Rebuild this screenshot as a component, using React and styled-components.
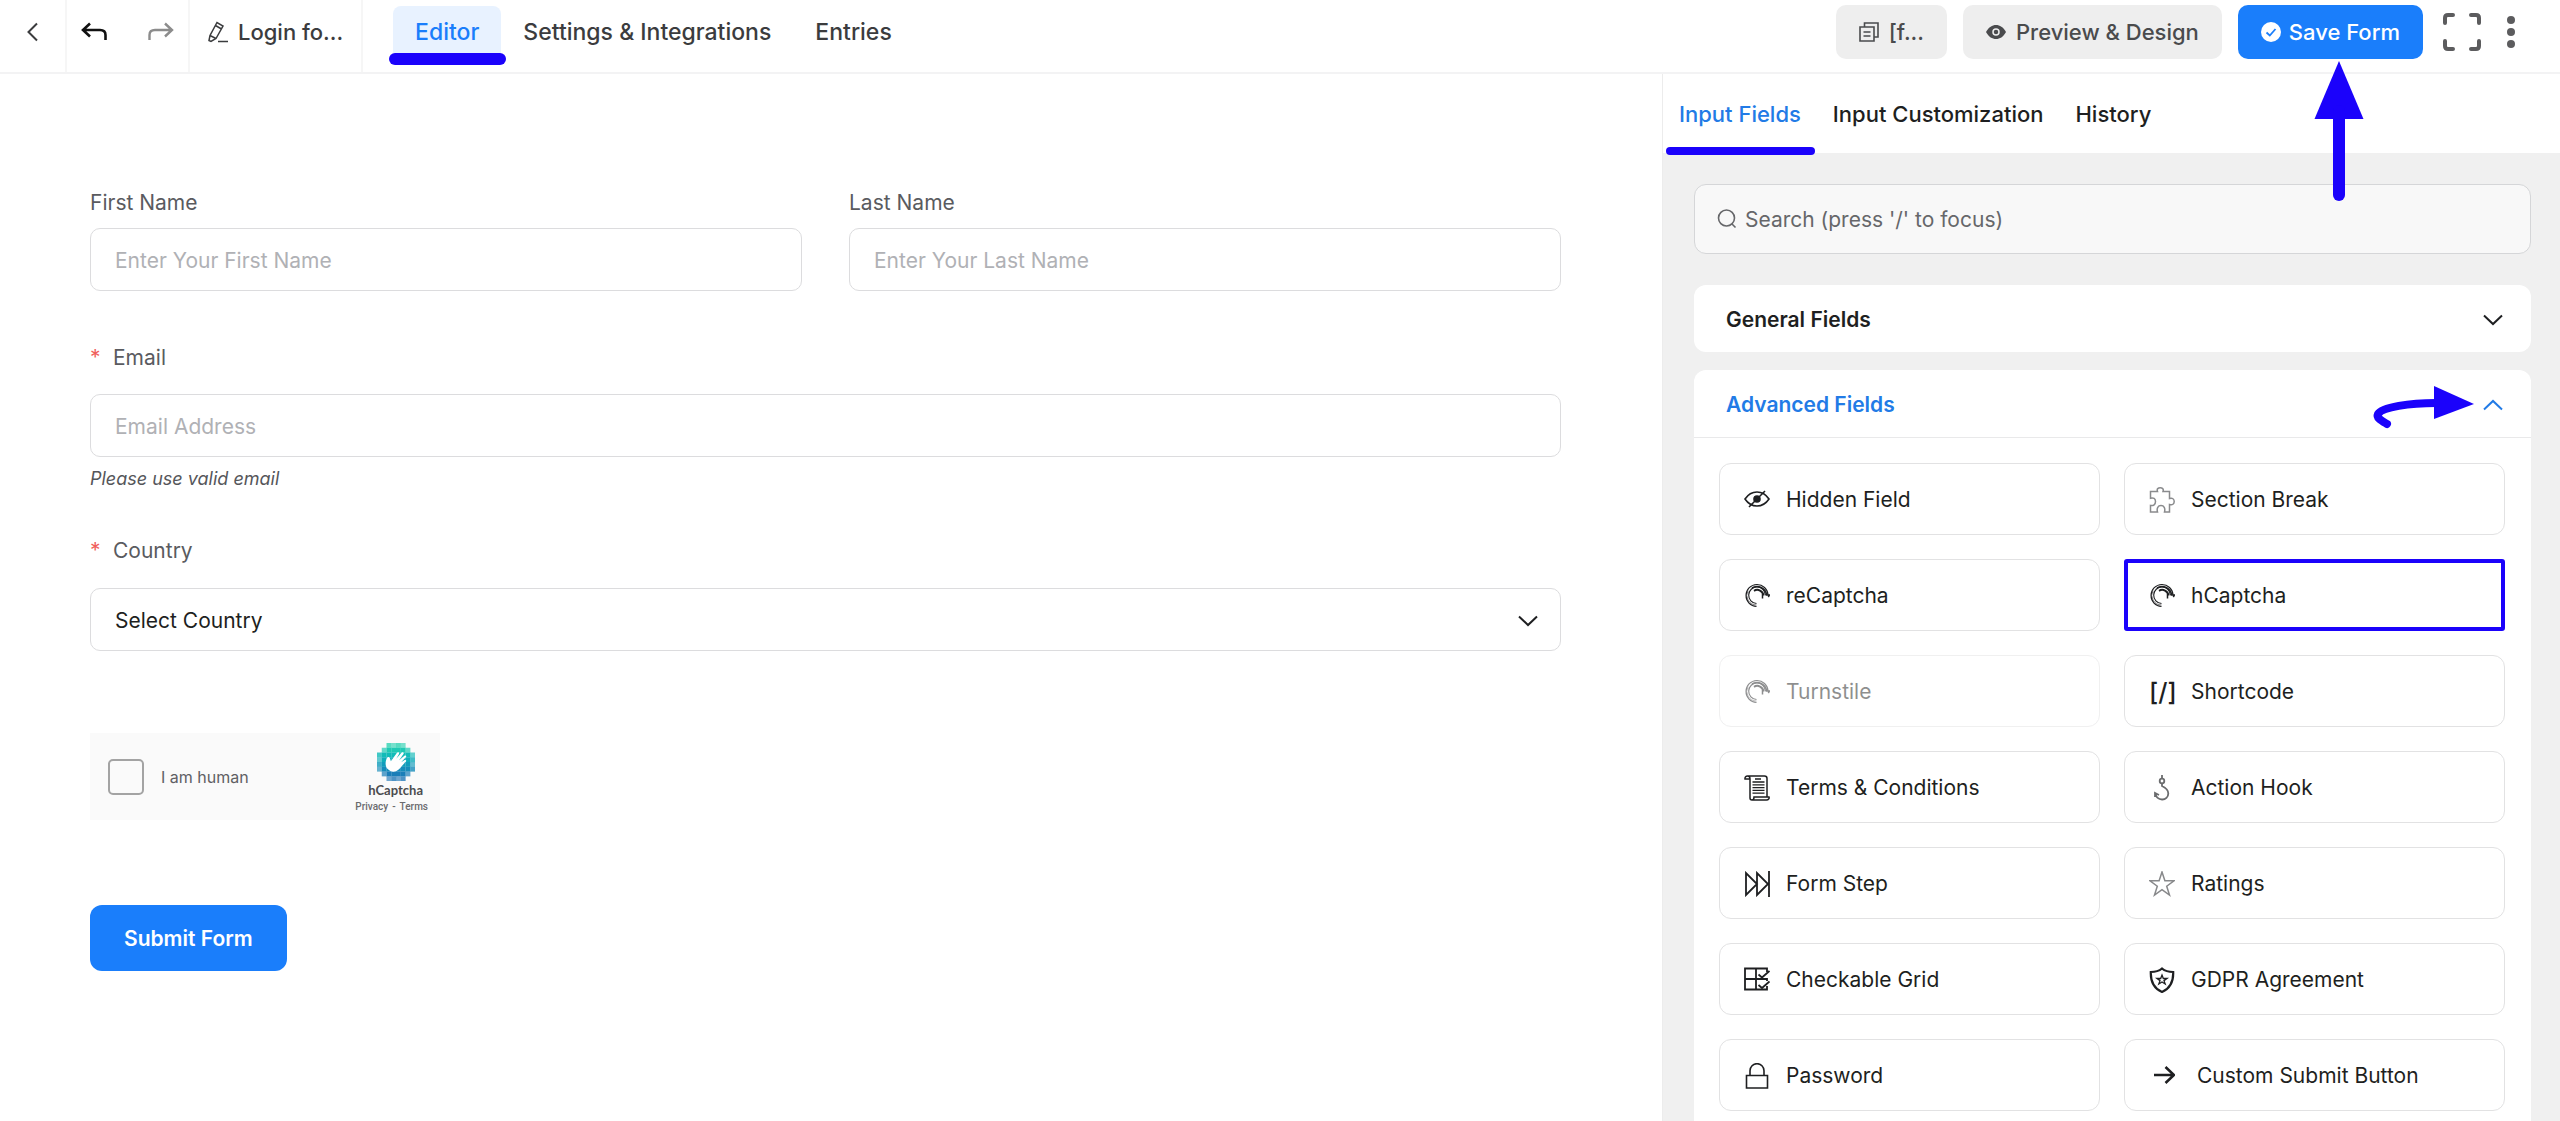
import React from "react";
import styled, { createGlobalStyle, css } from "styled-components";

const blue = "#1a7efb";
const linkBlue = "#227be6";
const marker = "#1b02fb";
const ink = "#1e1f21";
const line = "#e2e2e3";

const GlobalStyle = createGlobalStyle`
  *, *::before, *::after { box-sizing: border-box; }
  body {
    margin: 0;
    background: #fff;
    color: ${ink};
    font-family: Inter, "Liberation Sans", sans-serif;
    font-size: 21px;
    line-height: 30px;
  }
  button, input, select { font: inherit; color: inherit; }
  button { cursor: pointer; }
  svg { display: block; flex: none; }
`;

const Shell = styled.div`
  display: flex;
  flex-direction: column;
  height: 100vh;
  overflow: hidden;
`;

const Header = styled.header`
  display: flex;
  flex: none;
  height: 74px;
  border-bottom: 2px solid #f3f3f4;
  font-size: 22px;
  font-weight: 500;
  color: #3b3c3e;
`;

const HeaderCell = styled.div`
  display: flex;
  align-items: center;
  gap: ${(p) => p.$gap || 0}px;
  padding: 0 ${(p) => p.$pad}px 8px;
  border-right: 2px solid #f6f6f6;
`;

const IconButton = styled.button`
  display: flex;
  align-items: center;
  justify-content: center;
  padding: 0;
  border: 0;
  background: none;
  color: ${(p) => p.$color || "#3b3c3e"};
`;

const FormName = styled.button`
  display: flex;
  align-items: center;
  gap: 10px;
  padding: 0;
  border: 0;
  background: none;
`;

const Nav = styled.nav`
  display: flex;
  margin-left: 30px;
  padding-top: 6px;
  height: 60px;
  font-size: 23px;
`;

const NavLink = styled.a`
  position: relative;
  padding: 11px 22px;
  color: inherit;
  text-decoration: none;
  border-radius: 8px;
  ${(p) =>
    p.$active &&
    css`
      color: ${blue};
      background: #e8f2ff;
      &::after {
        content: "";
        position: absolute;
        left: -4px;
        right: -5px;
        top: 47px;
        height: 12px;
        border-radius: 6px;
        background: ${marker};
      }
    `}
`;

const Actions = styled.div`
  display: flex;
  align-items: center;
  gap: 16px;
  margin-left: auto;
  padding: 0 45px 8px 0;
`;

const ActionButton = styled.button`
  display: flex;
  align-items: center;
  justify-content: center;
  gap: ${(p) => (p.$primary ? 8 : 10)}px;
  height: 54px;
  padding: 0 ${(p) => p.$pad}px;
  border: 0;
  border-radius: 10px;
  font-weight: 500;
  background: ${(p) => (p.$primary ? blue : "#eeeeee")};
  color: ${(p) => (p.$primary ? "#fff" : "#4a4b4d")};
`;

const SaveSlot = styled.div`
  position: relative;
`;

const UpArrow = styled.svg`
  position: absolute;
  z-index: 2;
  left: 76px;
  top: 56px;
`;

const WindowTools = styled.div`
  display: flex;
  align-items: center;
  gap: 26px;
  margin-left: 4px;
`;

const Body = styled.div`
  display: flex;
  flex: 1;
  min-height: 0;
`;

const Canvas = styled.main`
  flex: 1;
  min-width: 0;
  padding: 114px 101px 0 90px;
`;

const FieldRow = styled.div`
  display: grid;
  grid-template-columns: 1fr 1fr;
  gap: 47px;
  margin-bottom: 52px;
`;

const Field = styled.div`
  display: flex;
  flex-direction: column;
  gap: ${(p) => p.$gap}px;
`;

const Label = styled.label`
  display: flex;
  gap: 13px;
  color: #5a5b5f;
`;

const Star = styled.span`
  color: #f0605c;
  width: 10px;
`;

const inputBox = css`
  display: block;
  width: 100%;
  height: 63px;
  padding: 2px 24px 0;
  border: 1px solid #dcdcde;
  border-radius: 10px;
  background: #fff;
`;

const TextInput = styled.input`
  ${inputBox}
  &::placeholder { color: #b0b1b5; opacity: 1; }
`;

const Help = styled.p`
  margin: 10px 0 45px;
  font-size: 18px;
  line-height: 24px;
  font-style: italic;
  color: #55565a;
`;

const SelectWrap = styled.div`
  position: relative;
  svg {
    position: absolute;
    right: 23px;
    top: 27px;
    pointer-events: none;
  }
`;

const Select = styled.select`
  ${inputBox}
  appearance: none;
`;

const Captcha = styled.div`
  display: flex;
  align-items: center;
  width: 350px;
  height: 87px;
  margin: 82px 0 85px;
  padding: 0 12px 0 18px;
  background: #fafafa;
`;

const CaptchaLabel = styled.label`
  display: flex;
  align-items: center;
  gap: 17px;
  font-size: 16px;
  line-height: 24px;
  color: #5f6064;
`;

const CaptchaBox = styled.input`
  appearance: none;
  width: 36px;
  height: 36px;
  margin: 0;
  border: 2px solid #a3a3a3;
  border-radius: 5px;
  background: #fafafa;
`;

const CaptchaBrand = styled.div`
  display: flex;
  flex-direction: column;
  align-items: flex-end;
  margin-left: auto;
  padding-top: 4px;
`;

const BrandMark = styled.div`
  display: flex;
  flex-direction: column;
  align-items: center;
  margin-right: 5px;
`;

const BrandName = styled.strong`
  font: 700 13px/18px Lato, sans-serif;
  color: #4b4c4e;
`;

const BrandLinks = styled.div`
  display: flex;
  gap: 4px;
  font: 500 10px/16px Roboto, sans-serif;
  color: #6a6b6e;
  a { color: inherit; text-decoration: none; }
`;

const Submit = styled.button`
  height: 66px;
  padding: 2px 34px 0;
  border: 0;
  border-radius: 12px;
  background: ${blue};
  color: #fff;
  font-weight: 600;
`;

const Sidebar = styled.aside`
  display: flex;
  flex-direction: column;
  width: 898px;
  flex: none;
  border-left: 1px solid #ececec;
  background: #f0f0f0;
`;

const PanelTabs = styled.div`
  display: flex;
  flex: none;
  gap: 32px;
  height: 79px;
  padding: 24px 16px;
  background: #fff;
  font-size: 22px;
`;

const PanelTab = styled.button`
  position: relative;
  padding: 0;
  border: 0;
  background: none;
  font-weight: 500;
  color: ${(p) => (p.$active ? linkBlue : ink)};
  ${(p) =>
    p.$active &&
    css`
      &::after {
        content: "";
        position: absolute;
        z-index: 1;
        left: -13px;
        right: -14px;
        top: 49px;
        height: 8px;
        border-radius: 4px;
        background: ${marker};
      }
    `}
`;

const PanelBody = styled.div`
  display: flex;
  flex-direction: column;
  gap: 18px;
  padding: 31px 29px 0 31px;
  overflow: hidden;
`;

const Search = styled.div`
  display: flex;
  flex: none;
  align-items: center;
  gap: 8px;
  height: 70px;
  margin-bottom: 13px;
  padding: 0 22px;
  border: 1px solid #d5d6d8;
  border-radius: 12px;
  background: #f8f8f8;
  input {
    flex: 1;
    padding: 2px 0 0;
    border: 0;
    background: none;
    &::placeholder { color: #66676a; opacity: 1; }
  }
`;

const Section = styled.section`
  flex: none;
  border-radius: 12px;
  background: #fff;
`;

const SectionHead = styled.button`
  display: flex;
  align-items: center;
  gap: 8px;
  width: 100%;
  height: 67px;
  padding: 2px 28px 0 32px;
  border: 0;
  background: none;
  font-weight: 600;
  text-align: left;
  color: ${(p) => (p.$open ? linkBlue : ink)};
`;

const SectionTitle = styled.span`
  flex: 1;
`;

const FieldGrid = styled.div`
  display: grid;
  grid-template-columns: 1fr 1fr;
  gap: 24px;
  padding: 25px 26px 25px 25px;
  border-top: 1px solid #e9e9ea;
`;

const FieldTile = styled.button`
  display: flex;
  align-items: center;
  gap: ${(p) => (p.$wide ? 22 : 16)}px;
  height: 72px;
  padding: 2px 24px 0;
  border: 1px solid ${line};
  border-radius: 12px;
  background: #fff;
  text-align: left;
  &:disabled { opacity: 0.5; color: inherit; }
  ${(p) =>
    p.$marked &&
    css`
      padding: 2px 21px 0;
      border: 4px solid ${marker};
      border-radius: 3px;
    `}
`;

const Code = styled.span`
  width: 26px;
  font-size: 25px;
  font-weight: 500;
  text-align: center;
  white-space: nowrap;
`;

const Glyph = ({ children, w = 26, h = 26, sw = 2, color = "currentColor" }) => (
  <svg width={w} height={h} viewBox={`0 0 ${w} ${h}`} fill="none" stroke={color} strokeWidth={sw} aria-hidden="true">
    {children}
  </svg>
);

const Chevron = ({ up }) => (
  <Glyph w={20} h={12}>
    <path d={up ? "M1 10.5 10 2l9 8.5" : "M1 1.5 10 10l9-8.5"} />
  </Glyph>
);

const EyeOff = () => (
  <Glyph sw={1.6}>
    <path d="M1 12C4 7.500 8 5 13 5S22 7.500 25 12C22 16.500 18 19 13 19S4 16.500 1 12Z" />
    <circle cx="13" cy="12" r="3" fill="currentColor" />
    <path d="M5 20 21 4" />
  </Glyph>
);

const Puzzle = () => (
  <Glyph sw={1.5} color="#8a8b8d">
    <path d="M1.500 4.500H8.500C7.500 1.800 9.200.8 11.200.8S15 1.800 14 4.500H20.500V11.500C23.500 10.500 25.200 12.200 25.200 14.500S23.500 18.500 20.500 17.500V25H15.500C16.500 21.200 15 18.500 12 18.500S7.500 21.200 8.500 25H1.500V18.500C4.500 19 6.500 17.500 6.500 14.500S4.500 10.500 1.500 11.200Z" />
  </Glyph>
);

const Spinner = () => (
  <Glyph sw={1.1}>
    <path d="M12.500 23.500A11 11 0 1 1 24 12" />
    <path d="M12.500 20.500A8.300 8.300 0 1 1 21.300 12" />
    <path d="M8 5A9.700 9.700 0 0 1 22.600 12" strokeWidth="1.600" />
    <path d="M12.500 22A9.700 9.700 0 0 1 4 7.500" strokeWidth=".6" />
    <path d="M10 7.800A6.300 6.300 0 0 1 19.500 12.500" strokeWidth="2" />
    <path d="M18.500 10.500V15.500M21.500 12H25.500L24.300 14" strokeWidth="1.500" />
  </Glyph>
);

const Scroll = () => (
  <Glyph sw={1.5}>
    <path d="M3.500 1H20.500C22 1 23 2 23 3.500V22M6 4V23C6 24.500 7 25 8 25H22.500C24.500 25 25.500 23.500 25 22H10C10 24.500 9 25 8 25M6 4C6 2 5 1 3.500 1S.8 2 1 4H6" />
    <path d="M11 4H17M8.500 7H20.500M8.500 9.800H20.500M8.500 12.600H20.500M8.500 15.400H20.500M8.500 18.200H20.500" strokeWidth="1.300" />
  </Glyph>
);

const FormStepIcon = () => (
  <Glyph>
    <path d="M2 2V24L13 13ZM13 2V24L24 13ZM25 0V26" strokeWidth="1.800" />
  </Glyph>
);

const GridIcon = () => (
  <Glyph sw={1.8}>
    <path d="M23 5V1.500H1V22.500H23V19M12 1.500V22.500M1 12H23V14" />
    <path d="M14.500 7.500 18 10.500 25.500 4M14.500 18 18 21 25.500 14.500" />
  </Glyph>
);

const Lock = () => (
  <Glyph sw={1.6}>
    <path d="M2.500 12.500H23.500V25H2.500ZM6 12.500V7.700A7 7 0 0 1 20 7.700V12.500" />
  </Glyph>
);

const Hook = () => (
  <Glyph sw={1.8} color="#6b6c6e">
    <path d="M13 0V3.500" />
    <circle cx="13" cy="6" r="2.300" />
    <path d="M13 8.500V11C16 12.500 19.300 15 19.300 18.500A6 6 0 0 1 13 24.500C9.500 24.500 7 22 6.800 19.500M6 22V18L10 20" />
  </Glyph>
);

const StarIcon = () => (
  <Glyph sw={1.5} color="#88898b">
    <path d="M13 1 15.900 9.800H25L17.700 15.200 20.500 24 13 18.600 5.500 24 8.300 15.200 1 9.800H10.100Z" />
  </Glyph>
);

const Shield = () => (
  <Glyph sw={2.2}>
    <path d="M13 1.500C10 4 6 5 1.800 5C1.500 14 4 21 13 25C22 21 24.500 14 24.200 5C20 5 16 4 13 1.500Z" />
    <path d="M13 8 14.300 11.500H18L15 13.600 16.200 17 13 15 9.800 17 11 13.600 8 11.500H11.700Z" strokeWidth="1.300" />
  </Glyph>
);

const ArrowRight = () => (
  <Glyph sw={2.6}>
    <path d="M5 12H25M16.500 4 25 12 16.500 20" />
  </Glyph>
);

// 8x8 block grid with clipped corners; edge blocks are lighter
const logoRows = [2, 1, 0, 0, 0, 0, 1, 2];
const logoColors = ["#2fd3b3", "#1fc9b4", "#12bcb8", "#10adba", "#129cbb", "#168cba", "#1a7eb8", "#2379b8"];

const CaptchaLogo = () => (
  <svg width="38" height="38" viewBox="0 0 32 32" aria-hidden="true">
    {logoRows.map((inset, y) =>
      Array.from({ length: 8 - inset * 2 }, (_, i) => {
        const x = inset + i;
        const edge = x === 0 || x === 7 || y === 0 || y === 7;
        const rim = !edge && (i === 0 || x === 7 - inset);
        return (
          <rect
            key={`${x}-${y}`}
            x={x * 4}
            y={y * 4}
            width="4.100"
            height="4.100"
            fill={logoColors[y]}
            opacity={edge ? ((x + y) % 2 ? 0.65 : 0.8) : rim ? 0.7 : 1}
          />
        );
      })
    )}
    <path
      fill="#fff"
      d="M8.500 12.500c.6-1.200 2-1 2.300.2l.9 2.600L16.800 8.300c.9-1.200 2.300-.2 1.700 1l-2.300 4 4.600-5.200c1-1 2.200.1 1.500 1.200l-3.700 5.300 4.500-3.900c1.100-.8 2 .4 1.200 1.400l-4 4.200 3-1.900c1.100-.6 1.800.6.9 1.400-2.600 2.500-4.200 5-6.200 6.800-2.700 2.300-6.600 2-9-.6-2.300-2.500-2.200-6.300-.5-9.500z"
    />
  </svg>
);

const tiles = [
  { name: "Hidden Field", icon: <EyeOff /> },
  { name: "Section Break", icon: <Puzzle /> },
  { name: "reCaptcha", icon: <Spinner /> },
  { name: "hCaptcha", icon: <Spinner />, marked: true },
  { name: "Turnstile", icon: <Spinner />, disabled: true },
  { name: "Shortcode", icon: <Code>[/]</Code> },
  { name: "Terms & Conditions", icon: <Scroll /> },
  { name: "Action Hook", icon: <Hook /> },
  { name: "Form Step", icon: <FormStepIcon /> },
  { name: "Ratings", icon: <StarIcon /> },
  { name: "Checkable Grid", icon: <GridIcon /> },
  { name: "GDPR Agreement", icon: <Shield /> },
  { name: "Password", icon: <Lock /> },
  { name: "Custom Submit Button", icon: <ArrowRight />, wide: true },
];

function TopBar() {
  return (
    <Header>
      <HeaderCell $pad={26}>
        <IconButton aria-label="Back">
          <Glyph w={13} h={20}>
            <path d="M11 1.500 2.500 10l8.500 8.500" />
          </Glyph>
        </IconButton>
      </HeaderCell>
      <HeaderCell $pad={14} $gap={41}>
        <IconButton aria-label="Undo" $color="#111">
          <Glyph h={20} sw={2.6}>
            <path d="M9 1.500 2 8l7 6.500M2 8H19C23 8 24.500 10 24.500 13V18" />
          </Glyph>
        </IconButton>
        <IconButton aria-label="Redo" $color="#8c8c8c">
          <Glyph h={20} sw={2.4}>
            <path d="M17 1.500 24 8l-7 6.500M24 8H7C3 8 1.500 10 1.500 13V18" />
          </Glyph>
        </IconButton>
      </HeaderCell>
      <HeaderCell $pad={18}>
        <FormName>
          <Glyph w={20} h={22} sw={1.5}>
            <path d="M1 19.500 2 14.500 9 1.500 15 5 8 17.500 3 20.500ZM7.500 4.500 13.500 8M2 14.500 8 17.500M10 20.500H20" />
          </Glyph>
          Login fo...
        </FormName>
      </HeaderCell>
      <Nav>
        <NavLink href="#editor" $active>Editor</NavLink>
        <NavLink href="#settings">Settings &amp; Integrations</NavLink>
        <NavLink href="#entries">Entries</NavLink>
      </Nav>
      <Actions>
        <ActionButton $pad={23}>
          <Glyph w={20} h={20} sw={1.6}>
            <path d="M1 5H15V19H1ZM5.500 5V1H19V15H15M4.500 10H11.500M4.500 14H11.500" />
          </Glyph>
          [f...
        </ActionButton>
        <ActionButton $pad={23}>
          <svg width="20" height="16" viewBox="0 0 20 16" aria-hidden="true">
            <path fill="#4a4b4d" d="M0 8C3 3 6 1 10 1s7 2 10 7c-3 5-6 7-10 7S3 13 0 8Z" />
            <circle cx="10" cy="8" r="3" fill="none" stroke="#eee" strokeWidth="1.500" />
          </svg>
          Preview &amp; Design
        </ActionButton>
        <SaveSlot>
          <ActionButton $primary $pad={23}>
            <svg width="20" height="20" viewBox="0 0 20 20" aria-hidden="true">
              <circle cx="10" cy="10" r="10" fill="#fff" />
              <path d="M5.500 10.500 8.800 13.500 14.500 7" fill="none" stroke={blue} strokeWidth="1.800" />
            </svg>
            Save Form
          </ActionButton>
          <UpArrow width="50" height="142" viewBox="0 0 50 142" aria-hidden="true">
            <path d="M25 0 49.500 58H.5Z" fill={marker} />
            <path d="M25 50V134" stroke={marker} strokeWidth="12" strokeLinecap="round" />
          </UpArrow>
        </SaveSlot>
        <WindowTools>
          <IconButton aria-label="Full screen" $color="#5c5c5e">
            <Glyph w={38} h={38} sw={4}>
              <path
                strokeLinecap="round"
                d="M2 10V5Q2 2 5 2H10M28 2H33Q36 2 36 5V10M36 28V33Q36 36 33 36H28M10 36H5Q2 36 2 33V28"
              />
            </Glyph>
          </IconButton>
          <IconButton aria-label="More" $color="#5c5c5e">
            <svg width="8" height="32" viewBox="0 0 8 32" fill="currentColor" aria-hidden="true">
              <circle cx="4" cy="4" r="4" />
              <circle cx="4" cy="16" r="4" />
              <circle cx="4" cy="28" r="4" />
            </svg>
          </IconButton>
        </WindowTools>
      </Actions>
    </Header>
  );
}

function FormCanvas() {
  return (
    <Canvas>
      <FieldRow>
        <Field $gap={10}>
          <Label htmlFor="first">First Name</Label>
          <TextInput id="first" placeholder="Enter Your First Name" />
        </Field>
        <Field $gap={10}>
          <Label htmlFor="last">Last Name</Label>
          <TextInput id="last" placeholder="Enter Your Last Name" />
        </Field>
      </FieldRow>
      <Field $gap={21}>
        <Label htmlFor="email"><Star>*</Star>Email</Label>
        <TextInput id="email" type="email" placeholder="Email Address" />
      </Field>
      <Help>Please use valid email</Help>
      <Field $gap={22}>
        <Label htmlFor="country"><Star>*</Star>Country</Label>
        <SelectWrap>
          <Select id="country">
            <option>Select Country</option>
          </Select>
          <Chevron />
        </SelectWrap>
      </Field>
      <Captcha>
        <CaptchaLabel>
          <CaptchaBox type="checkbox" />
          I am human
        </CaptchaLabel>
        <CaptchaBrand>
          <BrandMark>
            <CaptchaLogo />
            <BrandName>hCaptcha</BrandName>
          </BrandMark>
          <BrandLinks>
            <a href="#privacy">Privacy</a>-<a href="#terms">Terms</a>
          </BrandLinks>
        </CaptchaBrand>
      </Captcha>
      <Submit>Submit Form</Submit>
    </Canvas>
  );
}

function FieldPanel() {
  return (
    <Sidebar>
      <PanelTabs>
        <PanelTab $active>Input Fields</PanelTab>
        <PanelTab>Input Customization</PanelTab>
        <PanelTab>History</PanelTab>
      </PanelTabs>
      <PanelBody>
        <Search>
          <Glyph w={20} h={20} sw={1.6} color="#66676a">
            <circle cx="9.500" cy="9" r="8" />
            <path d="M15 15 18.500 18.500" />
          </Glyph>
          <input type="search" aria-label="Search fields" placeholder="Search (press '/' to focus)" />
        </Search>
        <Section>
          <SectionHead aria-expanded="false">
            <SectionTitle>General Fields</SectionTitle>
            <Chevron />
          </SectionHead>
        </Section>
        <Section>
          <SectionHead $open aria-expanded="true">
            <SectionTitle>Advanced Fields</SectionTitle>
            <svg width="105" height="50" viewBox="0 -6 105 50" aria-hidden="true">
              <path d="M64 0 104 18 64 33Z" fill={marker} />
              <path
                d="M66 17C40 17 12 21 8 28C6 32 12 35 17 38"
                fill="none"
                stroke={marker}
                strokeWidth="8"
                strokeLinecap="round"
              />
            </svg>
            <Chevron up />
          </SectionHead>
          <FieldGrid>
            {tiles.map((t) => (
              <FieldTile key={t.name} $marked={t.marked} $wide={t.wide} disabled={t.disabled}>
                {t.icon}
                {t.name}
              </FieldTile>
            ))}
          </FieldGrid>
        </Section>
      </PanelBody>
    </Sidebar>
  );
}

export default function App() {
  return (
    <>
      <GlobalStyle />
      <Shell>
        <TopBar />
        <Body>
          <FormCanvas />
          <FieldPanel />
        </Body>
      </Shell>
    </>
  );
}
